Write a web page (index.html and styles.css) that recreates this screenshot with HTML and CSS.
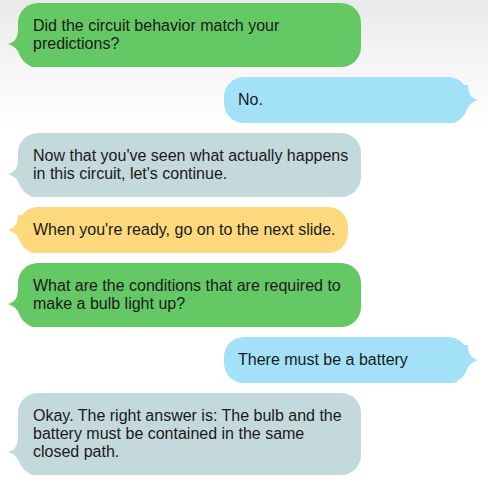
FILE: index.html
```html
<!DOCTYPE html>
<html>
<head>
<meta charset="utf-8">
<link rel="stylesheet" href="styles.css">
</head>
<body>
<div class="chat">
  <div class="msg left green">
    <svg class="tail" viewBox="0 0 30 38" width="30" height="38"><path d="M10,0 Q10,13 0,15 Q8,17 12,26 Q16,34 24,38 L30,38 L30,0 Z"/></svg>
    <span class="text">Did the circuit behavior match your predictions?</span>
  </div>
  <div class="msg right blue">
    <svg class="tail" viewBox="0 0 30 38" width="30" height="38"><path d="M10,0 Q10,13 0,15 Q8,17 12,26 Q16,34 24,38 L30,38 L30,0 Z"/></svg>
    <span class="text">No.</span>
  </div>
  <div class="msg left grey">
    <svg class="tail" viewBox="0 0 30 38" width="30" height="38"><path d="M10,0 Q10,13 0,15 Q8,17 12,26 Q16,34 24,38 L30,38 L30,0 Z"/></svg>
    <span class="text">Now that you've seen what actually happens in this circuit, let's continue.</span>
  </div>
  <div class="msg left yellow">
    <svg class="tail" viewBox="0 0 30 38" width="30" height="38"><path d="M10,0 Q10,13 0,15 Q8,17 12,26 Q16,34 24,38 L30,38 L30,0 Z"/></svg>
    <span class="text">When you're ready, go on to the next slide.</span>
  </div>
  <div class="msg left green">
    <svg class="tail" viewBox="0 0 30 38" width="30" height="38"><path d="M10,0 Q10,13 0,15 Q8,17 12,26 Q16,34 24,38 L30,38 L30,0 Z"/></svg>
    <span class="text">What are the conditions that are required to make a bulb light up?</span>
  </div>
  <div class="msg right blue">
    <svg class="tail" viewBox="0 0 30 38" width="30" height="38"><path d="M10,0 Q10,13 0,15 Q8,17 12,26 Q16,34 24,38 L30,38 L30,0 Z"/></svg>
    <span class="text">There must be a battery</span>
  </div>
  <div class="msg left grey">
    <svg class="tail" viewBox="0 0 30 38" width="30" height="38"><path d="M10,0 Q10,13 0,15 Q8,17 12,26 Q16,34 24,38 L30,38 L30,0 Z"/></svg>
    <span class="text">Okay. The right answer is: The bulb and the battery must be contained in the same closed path.</span>
  </div>
</div>
</body>
</html>
```
FILE: styles.css
```css
html, body {
  margin: 0;
  padding: 0;
}
body {
  width: 488px;
  height: 482px;
  overflow: hidden;
  background: linear-gradient(to bottom, #e9e9e9 0px, #f5f5f5 60px, #ffffff 130px);
  font-family: Arial, "Liberation Sans", sans-serif;
  font-size: 16px;
  line-height: 18px;
  color: #1a1a1a;
}
.chat {
  display: flex;
  flex-direction: column;
  gap: 10px;
  padding: 3px 20px 0 18px;
}
.msg {
  position: relative;
  box-sizing: border-box;
  padding: 14px 12px 14px 15px;
  border-radius: 20px;
}
.text {
  position: relative;
}
.msg.left {
  align-self: flex-start;
  max-width: 343px;
}
.msg.right {
  align-self: flex-end;
  width: 244px;
  padding-left: 14px;
}
.tail {
  position: absolute;
  bottom: 0;
  display: block;
}
.left .tail {
  left: -10px;
}
.right .tail {
  right: -10px;
  transform: scaleX(-1);
}
.green { background: #64c864; }
.green .tail { fill: #64c864; }
.blue { background: #a3e1f8; }
.blue .tail { fill: #a3e1f8; }
.grey { background: #c4d9dc; }
.grey .tail { fill: #c4d9dc; }
.yellow { background: #fdd87c; }
.yellow .tail { fill: #fdd87c; }
```
